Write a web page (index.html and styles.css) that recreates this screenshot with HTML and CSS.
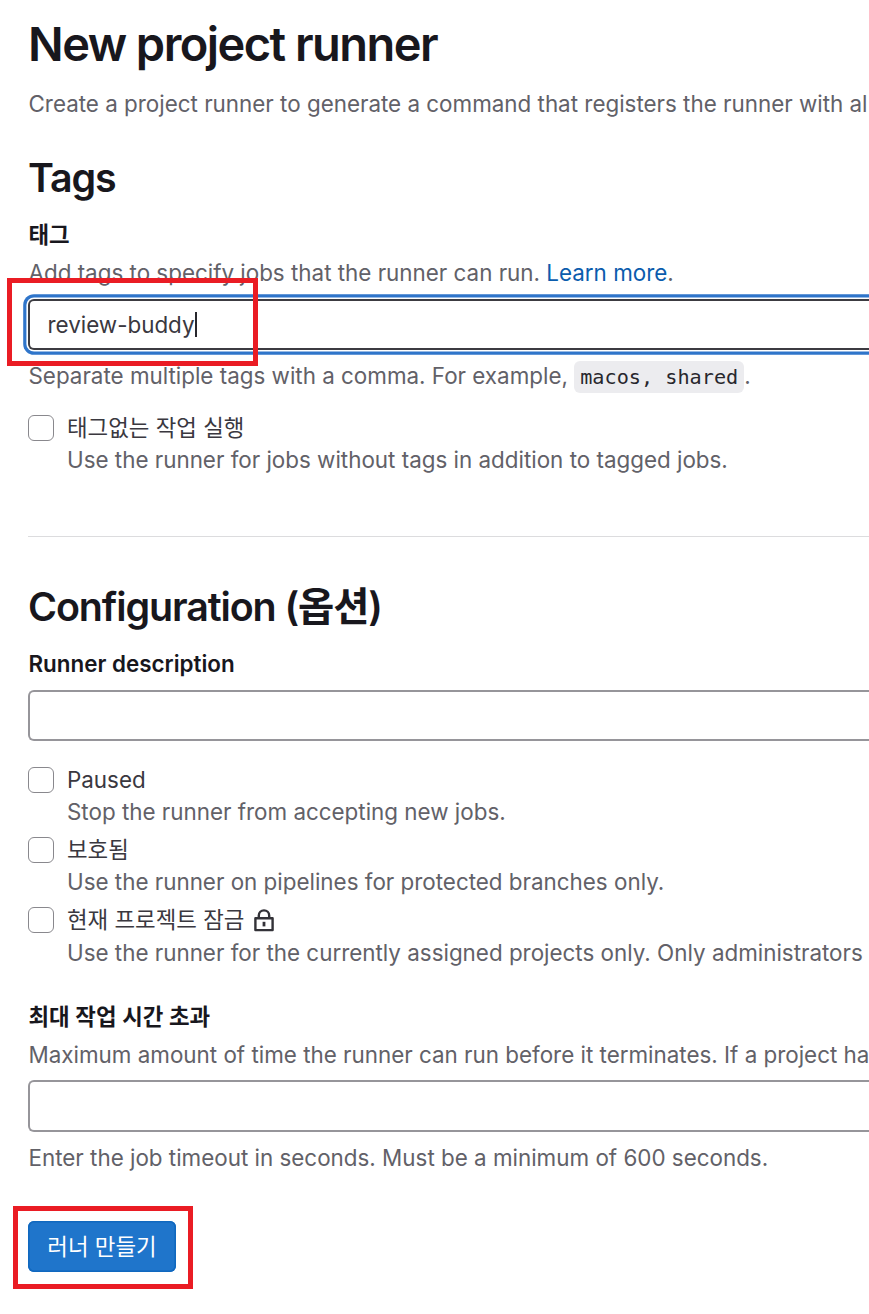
FILE: index.html
```html
<!DOCTYPE html>
<html lang="ko">
<head>
<meta charset="utf-8">
<title>New project runner</title>
<link rel="stylesheet" href="styles.css">
</head>
<body>
<main class="page">
  <h1 class="title">New project runner</h1>
  <p class="text intro">Create a project runner to generate a command that registers the runner with al</p>

  <section class="tags">
    <h2 class="heading">Tags</h2>
    <div class="label tags-label">태그</div>
    <p class="text tags-help">Add tags to specify jobs that the runner can run. <a class="link">Learn more</a>.</p>
    <div class="field-wrap">
      <div class="input focused"><span class="value">review-buddy</span><span class="caret"></span></div>
      <div class="mark mark-input"></div>
    </div>
    <p class="text example">Separate multiple tags with a comma. For example, <code class="code">macos, shared</code>.</p>
    <div class="check untagged">
      <span class="box"></span>
      <div class="check-body">
        <div class="check-label">태그없는 작업 실행</div>
        <p class="text">Use the runner for jobs without tags in addition to tagged jobs.</p>
      </div>
    </div>
  </section>

  <section class="config">
    <h2 class="heading">Configuration (옵션)</h2>
    <div class="label desc-label">Runner description</div>
    <div class="input"></div>
    <div class="checks">
      <div class="check">
        <span class="box"></span>
        <div class="check-body">
          <div class="check-label">Paused</div>
          <p class="text">Stop the runner from accepting new jobs.</p>
        </div>
      </div>
      <div class="check">
        <span class="box"></span>
        <div class="check-body">
          <div class="check-label">보호됨</div>
          <p class="text">Use the runner on pipelines for protected branches only.</p>
        </div>
      </div>
      <div class="check">
        <span class="box"></span>
        <div class="check-body">
          <div class="check-label">현재 프로젝트 잠금
            <svg class="lock" viewBox="0 0 20 23" fill="none" stroke="#333238" stroke-width="2.4"><path d="M1.4 9.2h17.2v11.9H1.4z" stroke-linejoin="round"/><path d="M4.8 9V6.6a5.2 5.2 0 0 1 10.4 0V9"/><path d="M10 12.8v4.6" stroke-width="2.8"/></svg>
          </div>
          <p class="text locked-help">Use the runner for the currently assigned projects only. Only administrators</p>
        </div>
      </div>
    </div>
    <div class="label timeout-label">최대 작업 시간 초과</div>
    <p class="text timeout-help">Maximum amount of time the runner can run before it terminates. If a project ha</p>
    <div class="input timeout-input"></div>
    <p class="text timeout-note">Enter the job timeout in seconds. Must be a minimum of 600 seconds.</p>
  </section>

  <div class="actions">
    <button class="submit" type="button">러너 만들기</button>
    <div class="mark mark-submit"></div>
  </div>
</main>
</body>
</html>
```
FILE: styles.css
```css
* { box-sizing: border-box; }
html, body { margin: 0; height: 1314px; overflow: hidden; background: #fff; }
body {
  font-family: Inter, "Noto Sans CJK KR", sans-serif;
  font-size: 22.4px;
  line-height: 32px;
  color: #3a383f;
}
h1, h2, p { margin: 0; }
.page { padding: 14px 0 0 28px; white-space: nowrap; }
.title { font-size: 47px; line-height: 60px; font-weight: 600; letter-spacing: -1.55px; color: #18171d; }
.text { color: #626168; text-indent: 0.5px; }
.intro { margin-top: 14px; }
.heading { font-size: 39.4px; line-height: 48px; font-weight: 600; letter-spacing: -1.1px; color: #18171d; }
.tags { padding-top: 34px; height: 417px; border-bottom: 1px solid #dcdcde; }
.label { font-weight: 600; color: #18171d; text-indent: 0.5px; }
.tags-label { margin-top: 17px; }
.tags-help { margin-top: 6px; }
.link { color: #0b5cad; }
.field-wrap { position: relative; margin-top: 10px; }
.input {
  display: flex;
  align-items: center;
  height: 51px;
  padding-left: 19.5px;
  border-radius: 6px 0 0 6px;
  background: #fff;
  border: 1.6px solid #89888d;
  border-width: 2px 0 2px 2px;
  border-color: #96959a;
}
.focused {
  padding-left: 17.5px;
  border-color: #3c3b41;
  box-shadow: 0 0 0 1.6px #fff, 0 0 0 4.8px #2f75ca;
}
.caret { width: 2px; height: 25px; background: #28272d; }
.mark { position: absolute; border: 5px solid #ea1c24; }
.mark-input { left: -21px; top: -21px; width: 251px; height: 88px; }
.example { margin-top: 10px; }
.code {
  display: inline-block;
  padding: 0 6px;
  border-radius: 6px;
  background: #ececef;
  color: #28272d;
  font: 20.2px/32px "DejaVu Sans Mono", monospace;
  text-indent: 0;
}
.check { display: flex; }
.check .text { text-indent: 0; }
.box { width: 26px; height: 26px; margin: 3px 13px 0 0; flex: none; border: 1px solid #89888d; border-radius: 6px; background: #fff; }
.untagged { margin-top: 19px; }
.config { padding-top: 46px; }
.desc-label { margin: 17px 0 10px; }
.checks { display: grid; gap: 6px; margin-top: 23px; }
.lock { width: 20px; height: 23px; margin-left: 3px; vertical-align: -4px; }
.locked-help { margin-top: 1px; }
.timeout-label { margin-top: 32px; }
.timeout-help { margin-top: 6px; }
.timeout-input { height: 52px; margin-top: 9px; }
.timeout-note { margin-top: 10px; }
.actions { position: relative; margin-top: 47px; }
.submit {
  display: block;
  width: 148px;
  height: 51px;
  padding: 0;
  border: 0;
  border-radius: 6px;
  background: #1f75cb;
  box-shadow: inset 0 0 0 1.6px #1068bf;
  color: #fff;
  font: inherit;
}
.mark-submit { left: -15px; top: -15px; width: 180px; height: 83px; }
```
